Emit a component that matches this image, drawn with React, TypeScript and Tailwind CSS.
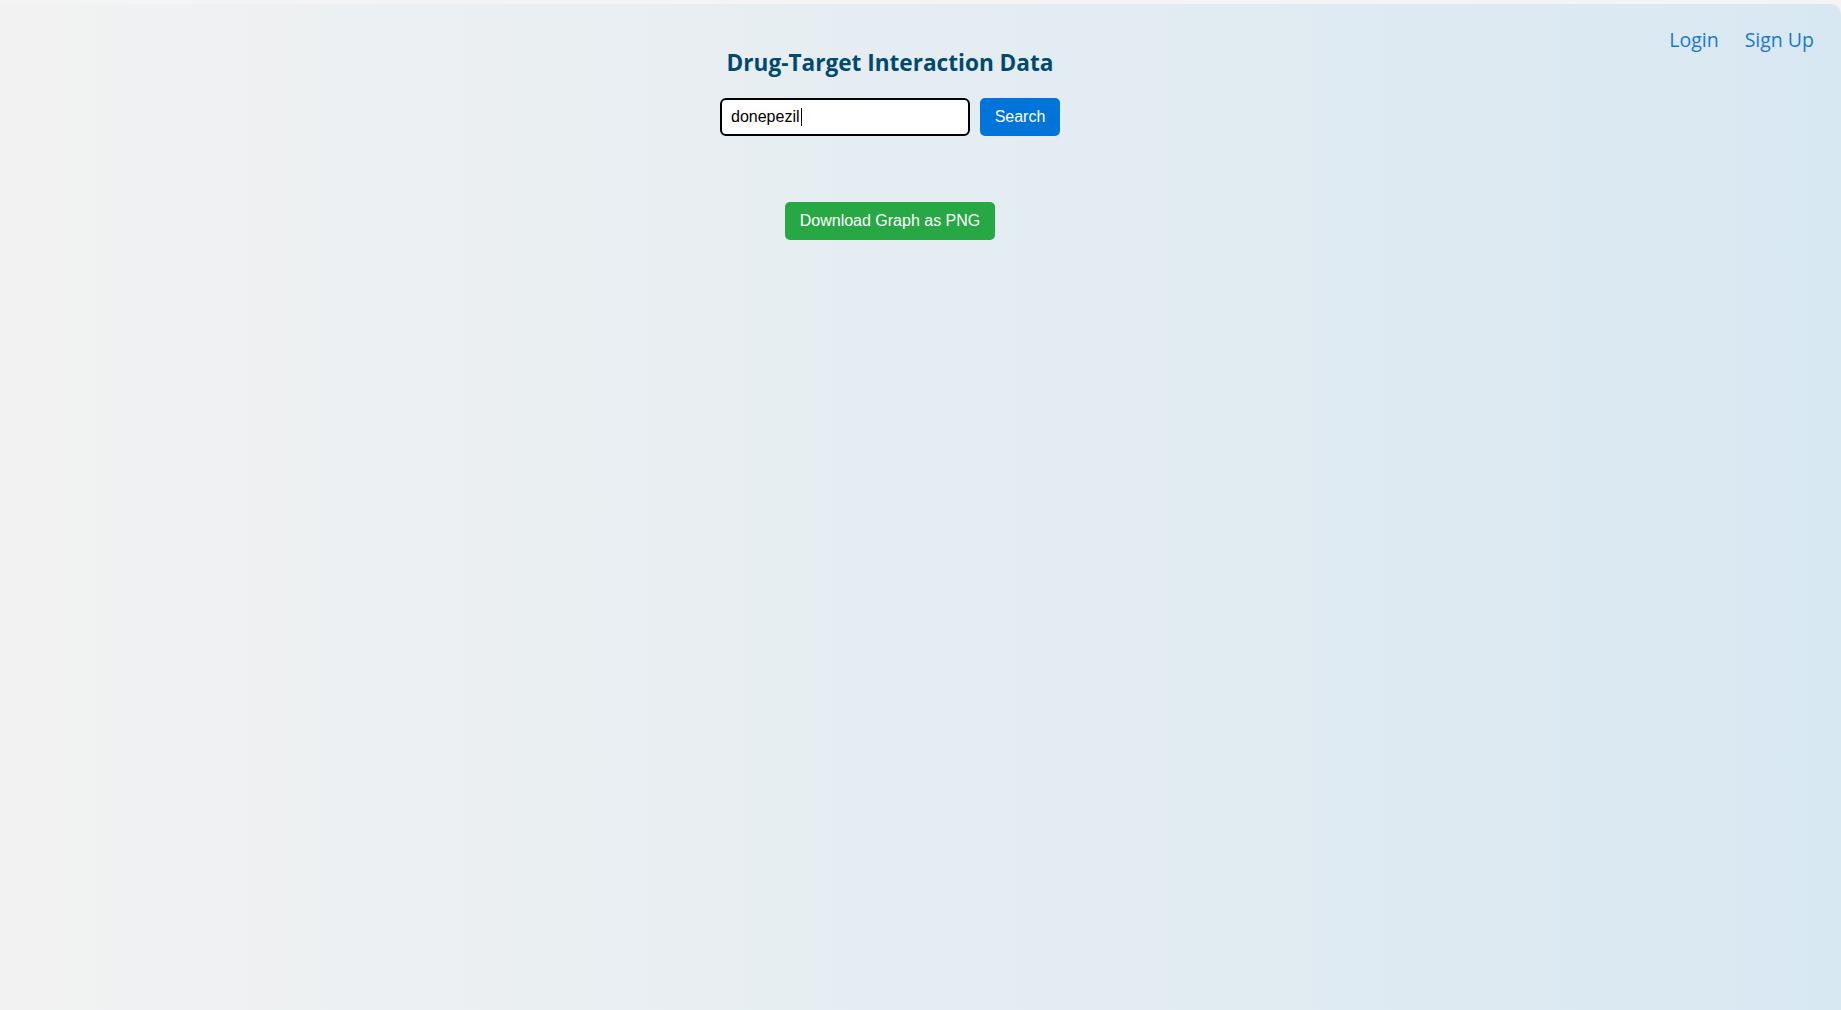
export default function App() {
  return (
    <div className="h-[1010px] w-full bg-[#f4f4f4] overflow-hidden">
      <div className="mt-[4px] h-[1006px] rounded-tr-[10px] bg-linear-to-r from-[#f2f2f2] to-[#d8e8f2] relative">
        {/* auth links */}
        <nav className="absolute top-[22px] right-[27px] flex gap-[26px] font-['Open_Sans',sans-serif] text-[19.5px] leading-[28px] text-[#1a78d4]">
          <a href="#">Login</a>
          <a href="#">Sign Up</a>
        </nav>

        <main className="w-[1780px] flex flex-col items-center pt-[45px]">
          <h1 className="font-['Open_Sans',sans-serif] font-bold text-[22.6px] leading-[28px] text-[#004a70]">
            Drug-Target Interaction Data
          </h1>

          <div className="mt-[21px] flex items-center gap-[10px] font-['Liberation_Sans',Arial,sans-serif] text-[16px]">
            <div className="w-[250px] h-[38px] border-2 border-black rounded-[6px] bg-white flex items-center px-[9px] text-black">
              donepezil
              <span className="inline-block w-px h-[18px] bg-black ml-px" />
            </div>
            <button className="w-[80px] h-[38px] rounded-[5px] bg-[#0074d9] text-white">
              Search
            </button>
          </div>

          <button className="mt-[66px] w-[210px] h-[38px] rounded-[5px] bg-[#28a745] text-white font-['Liberation_Sans',Arial,sans-serif] text-[16px]">
            Download Graph as PNG
          </button>
        </main>
      </div>
    </div>
  );
}
